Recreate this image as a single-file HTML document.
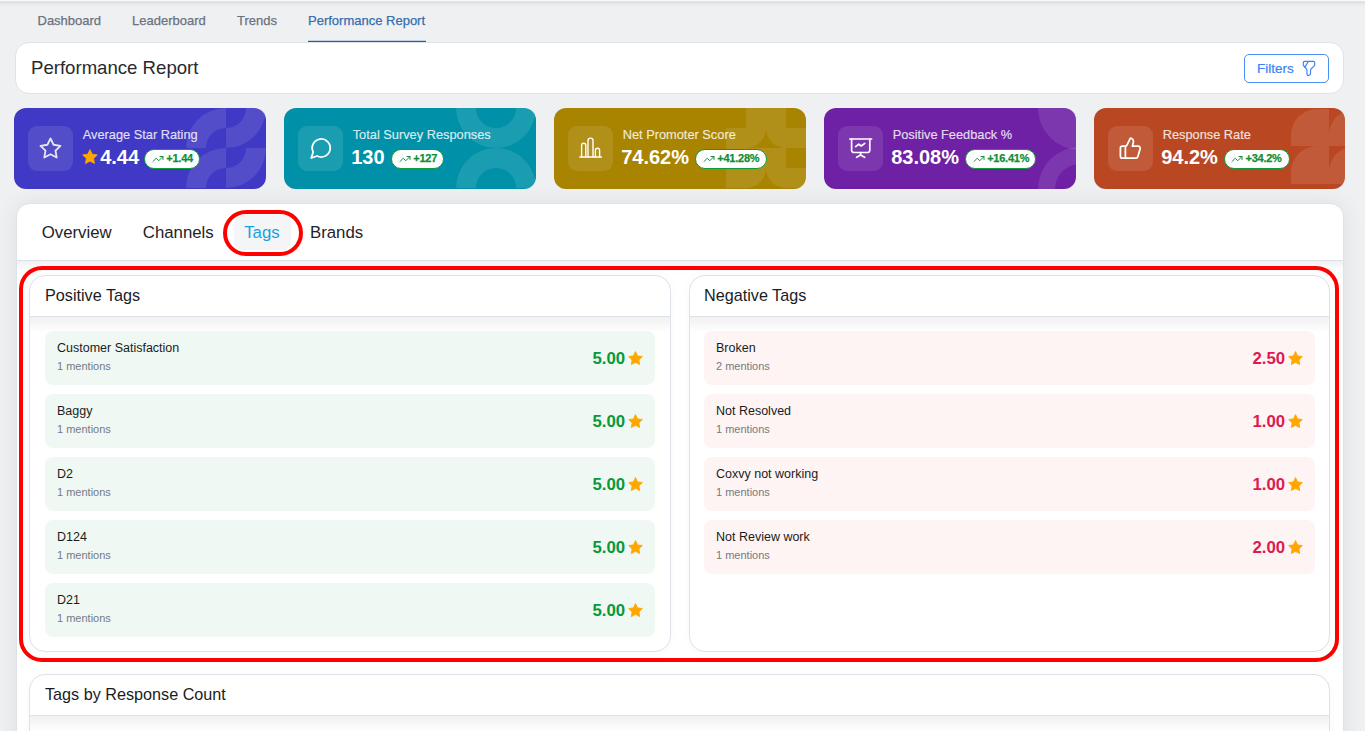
<!DOCTYPE html>
<html><head><meta charset="utf-8">
<style>
*{box-sizing:border-box;margin:0;padding:0}
html,body{width:1365px;height:731px;overflow:hidden}
body{background:#eff0f2;font-family:"Liberation Sans",sans-serif;position:relative;color:#1f2328}
.topline{position:absolute;left:0;top:0;width:1365px;height:8px;background:linear-gradient(#fff 0,#fafafa .6px,#dcdde0 1.7px,#e3e4e7 3px,#eaebed 4.5px,#eff0f2 7px)}
.nav{position:absolute;top:13.6px;font-size:13px;color:#6b7280;white-space:nowrap;line-height:13px;-webkit-text-stroke:.25px #6b7280}
.nav.active{color:#0f6cc9}
.underline{position:absolute;left:308px;top:41px;width:118px;height:1px;background:#0a68c9;box-shadow:0 -.6px 0 rgba(10,104,201,.35)}
.hdr{position:absolute;left:15px;top:42px;width:1329px;height:52px;background:#fff;border:1px solid #dfe3e8;border-radius:14px}
.hdr .t{position:absolute;left:15px;top:15.3px;font-size:18.6px;line-height:19px;color:#27292c;white-space:nowrap}
.fbtn{position:absolute;left:1228px;top:11px;width:85px;height:29px;border:1px solid #4a8ff2;border-radius:5px;color:#3b82f6}
.fbtn span{position:absolute;left:12px;top:7px;font-size:13.5px;line-height:14px;-webkit-text-stroke:.2px #3b82f6}
.fbtn svg{position:absolute;left:56px;top:5.4px}
.card{position:absolute;top:108px;width:251.8px;height:81px;border-radius:12px;overflow:hidden}
.card .ib{position:absolute;left:14px;top:18px;width:45px;height:45px;border-radius:9px;background:rgba(255,255,255,.1)}
.card .ib svg{position:absolute;left:0;top:0}
.card .lbl{position:absolute;left:68.7px;top:19.6px;font-size:12.8px;line-height:14px;color:rgba(255,255,255,.8);white-space:nowrap;-webkit-text-stroke:.2px rgba(255,255,255,.8)}
.card .val{position:absolute;left:68.7px;top:39.1px;font-size:20px;line-height:20px;font-weight:700;color:#fff;white-space:nowrap}
.card .vstar{position:absolute;left:66.5px;top:40.1px}
.badge{position:absolute;top:41.2px;height:19.4px;border:1.2px solid #0f9a3c;background:#fff;border-radius:10px;color:#0b8f37;font-size:11px;font-weight:700;line-height:11px;white-space:nowrap}
.badge .ti{position:absolute;left:6.6px;top:2.6px}
.badge span{position:absolute;left:21px;top:2.6px;-webkit-text-stroke:.25px #0b8f37;letter-spacing:-.25px}
.pat{position:absolute;right:0;top:0;width:80px;height:80px}
.sq{position:absolute;width:37.5px;height:37.5px;border-top-left-radius:26px;background:rgba(255,255,255,.1)}
.panel{position:absolute;left:16px;top:203px;width:1328px;height:560px;background:#fff;border:1px solid #dfe3e8;border-radius:14px;overflow:hidden;box-shadow:0 0 22px rgba(0,0,0,.07)}
.tabsep{position:absolute;left:0;top:56px;width:100%;height:1px;background:#dde1e5}
.content{position:absolute;left:0;top:57px;width:100%;height:520px;background:linear-gradient(#eff0f1,#fafafa 6px,#fff 14px)}
.tab{position:absolute;top:20.2px;font-size:16.8px;line-height:18px;color:#1f2328;white-space:nowrap}
.tagbg{position:absolute;left:217px;top:10.5px;width:57px;height:35.5px;border-radius:8px;background:#f3f5f7}
.tc{position:absolute;background:#fff;border:1px solid #dde2e8;border-radius:16px;overflow:hidden;box-shadow:0 0 10px rgba(0,0,0,.03)}
.tc .sh{position:absolute;left:0;top:41px;width:100%;height:16px;background:linear-gradient(rgba(0,0,0,.055),rgba(0,0,0,0))}
.tc .h{position:absolute;left:0;top:0;width:100%;height:41px;border-bottom:1px solid #dde2e8}
.tc .h span{position:absolute;left:15px;top:11px;font-size:16.2px;line-height:17px;color:#1a1c1e;white-space:nowrap}
.item{position:absolute;height:54px;border-radius:8px}
.item.p{background:#f0f8f3}
.item.n{background:#fef4f3}
.item .nm{position:absolute;left:12px;top:10px;font-size:12.5px;line-height:14px;color:#1a1c1e;white-space:nowrap}
.item .mn{position:absolute;left:12px;top:29px;font-size:11px;line-height:13px;color:#737a84;white-space:nowrap}
.item .sc{position:absolute;right:10.7px;top:19px;display:flex;align-items:center;font-size:16.8px;font-weight:700;line-height:16px}
.item.p .sc{color:#07993a}
.item.n .sc{color:#db1b52}
.item .sc svg{margin-left:2.2px}
.redbox{position:absolute;left:19px;top:266px;width:1320px;height:396px;border:4px solid #ff0000;border-radius:23px}
.redell{position:absolute;left:223px;top:210px;width:80px;height:46px;border:4px solid #ff0000;border-radius:23px}
</style></head>
<body>
<div class="topline"></div>
<div class="nav" style="left:37.5px">Dashboard</div>
<div class="nav" style="left:132px">Leaderboard</div>
<div class="nav" style="left:237px">Trends</div>
<div class="nav active" style="left:308px">Performance Report</div>
<div class="underline"></div>
<div class="hdr">
  <div class="t">Performance Report</div>
  <div class="fbtn"><span>Filters</span>
    <svg width="16" height="17" preserveAspectRatio="none" viewBox="0 0 24 24" fill="none" stroke="#3b82f6" stroke-width="1.75" stroke-linecap="round" stroke-linejoin="round"><path d="M5.4 2.1h13.2c1.1 0 2 .9 2 2v2.2c0 .8-.5 1.8-1 2.3l-4.3 3.8c-.6.5-1 1.5-1 2.3V19c0 .6-.4 1.4-.9 1.7l-1.4.9c-1.3.8-3.1-.1-3.1-1.7v-5.3c0-.7-.4-1.6-.8-2.1L4.3 8.5c-.5-.5-.9-1.4-.9-2V4.2c0-1.2.9-2.1 2-2.1z"/><path d="M10.93 2.1 6 10"/></svg>
  </div>
</div>
<div class="card" style="left:14px;background:#4039c5"><svg class="pat" width="80" height="80" viewBox="0 0 80 80" fill="rgba(255,255,255,.1)"><path d="M0 40A40 40 0 0 1 40 0V20A20 20 0 0 0 20 40Z"/><path d="M80 0A40 40 0 0 1 40 40V20A20 20 0 0 0 60 0Z"/><path d="M0 80A40 40 0 0 1 40 40V60A20 20 0 0 0 20 80Z"/><path d="M80 40A40 40 0 0 1 40 80V60A20 20 0 0 0 60 40Z"/></svg><div class="ib"><svg width="45" height="45" viewBox="0 0 45 45" fill="none" stroke="#e6e6ee" stroke-width="1.8" stroke-linejoin="round" stroke-linecap="round"><polygon points="22.5 12.5 25.59 18.76 32.5 19.77 27.5 24.64 28.68 31.52 22.5 28.27 16.32 31.52 17.5 24.64 12.5 19.77 19.41 18.76"/></svg></div><div class="lbl">Average Star Rating</div><svg class="vstar" width="18" height="18" viewBox="0 0 24 24"><path fill="#ffa600" d="M12 2.2l2.95 6.1 6.7.95-4.85 4.7 1.15 6.65L12 17.45 6.05 20.6l1.15-6.65-4.85-4.7 6.7-.95z" stroke="#ffa600" stroke-width="1.2" stroke-linejoin="round"/></svg><div class="val" style="left:86.2px">4.44</div><div class="badge" style="left:130.3px;width:56.2px"><svg class="ti" width="12" height="12" viewBox="0 0 24 24" fill="none" stroke="#15913f" stroke-width="2" stroke-linecap="round" stroke-linejoin="round"><polyline points="22 7 13.5 15.5 8.5 10.5 2 17"/><polyline points="16 7 22 7 22 13"/></svg><span>+1.44</span></div></div>
<div class="card" style="left:284px;background:#0091a9"><svg class="pat" width="80" height="80" viewBox="0 0 80 80" fill="rgba(255,255,255,.1)"><path d="M0 0A40 40 0 0 0 80 0H60A20 20 0 0 1 20 0Z"/><path d="M0 80A40 40 0 0 1 80 80H60A20 20 0 0 0 20 80Z"/></svg><div class="ib"><svg width="45" height="45" viewBox="0 0 45 45" fill="none" stroke="#fff" stroke-width="1.8" stroke-linejoin="round" stroke-linecap="round"><g transform="translate(11.2 10)"><path d="M7.9 20A9 9 0 1 0 4 16.1L2 22Z"/></g></svg></div><div class="lbl">Total Survey Responses</div><div class="val" style="left:67.2px">130</div><div class="badge" style="left:107.3px;width:53.2px"><svg class="ti" width="12" height="12" viewBox="0 0 24 24" fill="none" stroke="#15913f" stroke-width="2" stroke-linecap="round" stroke-linejoin="round"><polyline points="22 7 13.5 15.5 8.5 10.5 2 17"/><polyline points="16 7 22 7 22 13"/></svg><span>+127</span></div></div>
<div class="card" style="left:554px;background:#a98400"><svg class="pat" width="80" height="80" viewBox="0 0 80 80" fill="rgba(255,255,255,.1)"><path d="M20 0H60V20H80V40H60A20 20 0 0 1 40 20A20 20 0 0 1 20 40H0V20H20Z"/><path d="M0 40H60V60H80V80H60A20 20 0 0 1 40 60A20 20 0 0 1 20 80H0Z"/></svg><div class="ib"><svg width="45" height="45" viewBox="0 0 45 45" fill="none" stroke="#fff" stroke-width="1.4" stroke-linejoin="round" stroke-linecap="round"><path d="M11.8 31h21.6"/><path d="M13.6 31V19.4a2.1 2.1 0 0 1 4.2 0V31"/><path d="M20 31V14.6a2.5 2.5 0 0 1 5 0V31"/><path d="M27.4 31v-6.6a2.1 2.1 0 0 1 4.2 0V31"/></svg></div><div class="lbl">Net Promoter Score</div><div class="val" style="left:67.2px">74.62%</div><div class="badge" style="left:141.3px;width:71.5px"><svg class="ti" width="12" height="12" viewBox="0 0 24 24" fill="none" stroke="#15913f" stroke-width="2" stroke-linecap="round" stroke-linejoin="round"><polyline points="22 7 13.5 15.5 8.5 10.5 2 17"/><polyline points="16 7 22 7 22 13"/></svg><span>+41.28%</span></div></div>
<div class="card" style="left:824px;background:#6e21a5"><svg class="pat" style="height:81px" width="80" height="81" viewBox="0 0 80 81" fill="rgba(255,255,255,.1)"><path d="M42 0A42 42 0 0 0 84 42V0Z"/><path d="M42 81A42 42 0 0 1 84 39V56A25 25 0 0 0 59 81Z"/></svg><div class="ib"><svg width="45" height="45" viewBox="0 0 45 45" fill="none" stroke="#fff" stroke-width="1.7" stroke-linejoin="round" stroke-linecap="round"><path d="M11.8 13h21.8"/><path d="M13.6 13v11.2a2.3 2.3 0 0 0 2.3 2.3h13.6a2.3 2.3 0 0 0 2.3-2.3V13"/><path d="M22.6 26.5v2.6l-4 2.2M22.6 29.1l4 2.2"/><path d="M17.6 20.6l3.2-2.4 2.4 1.8 3.6-2.6"/></svg></div><div class="lbl">Positive Feedback %</div><div class="val" style="left:67.2px">83.08%</div><div class="badge" style="left:141.2px;width:71.2px"><svg class="ti" width="12" height="12" viewBox="0 0 24 24" fill="none" stroke="#15913f" stroke-width="2" stroke-linecap="round" stroke-linejoin="round"><polyline points="22 7 13.5 15.5 8.5 10.5 2 17"/><polyline points="16 7 22 7 22 13"/></svg><span>+16.41%</span></div></div>
<div class="card" style="left:1094px;background:#b94822;width:251px"><div class="sq" style="left:197px;top:.5px"></div><div class="sq" style="left:234.5px;top:.5px"></div><div class="sq" style="left:197px;top:38px"></div><div class="sq" style="left:234.5px;top:38px"></div><div class="ib"><svg width="45" height="45" viewBox="0 0 45 45" fill="none" stroke="#fff" stroke-width="1.75" stroke-linejoin="round" stroke-linecap="round"><g transform="translate(10.4 10.2)"><path d="M7 10v12"/><path d="M15 5.88 14 10h5.83a2 2 0 0 1 1.92 2.56l-2.33 8A2 2 0 0 1 17.5 22H4a2 2 0 0 1-2-2v-8a2 2 0 0 1 2-2h2.76a2 2 0 0 0 1.79-1.11L12 2a3.13 3.13 0 0 1 3 3.88Z"/></g></svg></div><div class="lbl">Response Rate</div><div class="val" style="left:67.2px">94.2%</div><div class="badge" style="left:129.5px;width:66.1px"><svg class="ti" width="12" height="12" viewBox="0 0 24 24" fill="none" stroke="#15913f" stroke-width="2" stroke-linecap="round" stroke-linejoin="round"><polyline points="22 7 13.5 15.5 8.5 10.5 2 17"/><polyline points="16 7 22 7 22 13"/></svg><span>+34.2%</span></div></div>
<div class="panel">
  <div class="tagbg"></div>
  <div class="tab" style="left:24.7px">Overview</div>
  <div class="tab" style="left:125.8px">Channels</div>
  <div class="tab" style="left:227.2px;color:#18a0e0">Tags</div>
  <div class="tab" style="left:293px">Brands</div>
  <div class="tabsep"></div>
  <div class="content"></div>
</div>
<div class="tc" style="left:29px;top:275px;width:642px;height:377px"><div class="h"><span>Positive Tags</span></div><div class="sh"></div></div>
<div class="tc" style="left:689px;top:275px;width:641px;height:377px"><div class="h"><span style="left:14px">Negative Tags</span></div><div class="sh"></div></div>
<div class="item p" style="left:45px;top:331px;width:610px"><div class="nm">Customer Satisfaction</div><div class="mn">1 mentions</div><div class="sc">5.00<svg class="" width="17" height="17" viewBox="0 0 24 24"><path fill="#ffa600" d="M12 2.2l2.95 6.1 6.7.95-4.85 4.7 1.15 6.65L12 17.45 6.05 20.6l1.15-6.65-4.85-4.7 6.7-.95z" stroke="#ffa600" stroke-width="1.2" stroke-linejoin="round"/></svg></div></div>
<div class="item p" style="left:45px;top:394px;width:610px"><div class="nm">Baggy</div><div class="mn">1 mentions</div><div class="sc">5.00<svg class="" width="17" height="17" viewBox="0 0 24 24"><path fill="#ffa600" d="M12 2.2l2.95 6.1 6.7.95-4.85 4.7 1.15 6.65L12 17.45 6.05 20.6l1.15-6.65-4.85-4.7 6.7-.95z" stroke="#ffa600" stroke-width="1.2" stroke-linejoin="round"/></svg></div></div>
<div class="item p" style="left:45px;top:457px;width:610px"><div class="nm">D2</div><div class="mn">1 mentions</div><div class="sc">5.00<svg class="" width="17" height="17" viewBox="0 0 24 24"><path fill="#ffa600" d="M12 2.2l2.95 6.1 6.7.95-4.85 4.7 1.15 6.65L12 17.45 6.05 20.6l1.15-6.65-4.85-4.7 6.7-.95z" stroke="#ffa600" stroke-width="1.2" stroke-linejoin="round"/></svg></div></div>
<div class="item p" style="left:45px;top:520px;width:610px"><div class="nm">D124</div><div class="mn">1 mentions</div><div class="sc">5.00<svg class="" width="17" height="17" viewBox="0 0 24 24"><path fill="#ffa600" d="M12 2.2l2.95 6.1 6.7.95-4.85 4.7 1.15 6.65L12 17.45 6.05 20.6l1.15-6.65-4.85-4.7 6.7-.95z" stroke="#ffa600" stroke-width="1.2" stroke-linejoin="round"/></svg></div></div>
<div class="item p" style="left:45px;top:583px;width:610px"><div class="nm">D21</div><div class="mn">1 mentions</div><div class="sc">5.00<svg class="" width="17" height="17" viewBox="0 0 24 24"><path fill="#ffa600" d="M12 2.2l2.95 6.1 6.7.95-4.85 4.7 1.15 6.65L12 17.45 6.05 20.6l1.15-6.65-4.85-4.7 6.7-.95z" stroke="#ffa600" stroke-width="1.2" stroke-linejoin="round"/></svg></div></div>
<div class="item n" style="left:704px;top:331px;width:611px"><div class="nm">Broken</div><div class="mn">2 mentions</div><div class="sc">2.50<svg class="" width="17" height="17" viewBox="0 0 24 24"><path fill="#ffa600" d="M12 2.2l2.95 6.1 6.7.95-4.85 4.7 1.15 6.65L12 17.45 6.05 20.6l1.15-6.65-4.85-4.7 6.7-.95z" stroke="#ffa600" stroke-width="1.2" stroke-linejoin="round"/></svg></div></div>
<div class="item n" style="left:704px;top:394px;width:611px"><div class="nm">Not Resolved</div><div class="mn">1 mentions</div><div class="sc">1.00<svg class="" width="17" height="17" viewBox="0 0 24 24"><path fill="#ffa600" d="M12 2.2l2.95 6.1 6.7.95-4.85 4.7 1.15 6.65L12 17.45 6.05 20.6l1.15-6.65-4.85-4.7 6.7-.95z" stroke="#ffa600" stroke-width="1.2" stroke-linejoin="round"/></svg></div></div>
<div class="item n" style="left:704px;top:457px;width:611px"><div class="nm">Coxvy not working</div><div class="mn">1 mentions</div><div class="sc">1.00<svg class="" width="17" height="17" viewBox="0 0 24 24"><path fill="#ffa600" d="M12 2.2l2.95 6.1 6.7.95-4.85 4.7 1.15 6.65L12 17.45 6.05 20.6l1.15-6.65-4.85-4.7 6.7-.95z" stroke="#ffa600" stroke-width="1.2" stroke-linejoin="round"/></svg></div></div>
<div class="item n" style="left:704px;top:520px;width:611px"><div class="nm">Not Review work</div><div class="mn">1 mentions</div><div class="sc">2.00<svg class="" width="17" height="17" viewBox="0 0 24 24"><path fill="#ffa600" d="M12 2.2l2.95 6.1 6.7.95-4.85 4.7 1.15 6.65L12 17.45 6.05 20.6l1.15-6.65-4.85-4.7 6.7-.95z" stroke="#ffa600" stroke-width="1.2" stroke-linejoin="round"/></svg></div></div>
<div class="tc" style="left:29px;top:674px;width:1301px;height:80px"><div class="h"><span>Tags by Response Count</span></div><div class="sh"></div></div>
<div class="redbox"></div>
<div class="redell"></div>
</body></html>
